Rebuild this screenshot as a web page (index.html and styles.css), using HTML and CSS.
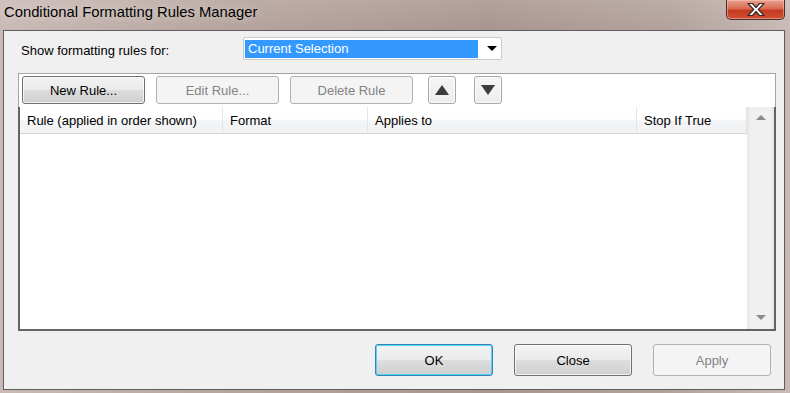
FILE: index.html
```html
<!DOCTYPE html>
<html lang="en">
<head>
    <meta charset="UTF-8">
    <title>Conditional Formatting Rules Manager</title>
    <link rel="stylesheet" href="styles.css">
</head>
<body>
    <div class="window">
        <div class="title-bar">
            <span class="title">Conditional Formatting Rules Manager</span>
            <button class="close-x" aria-label="Close">
                <svg width="26" height="15" viewBox="0 0 26 15">
                    <path d="M5 1.5h4.5l3.5 4 3.5-4h4.5l-5.7 6 5.7 6h-4.5l-3.5-4-3.5 4h-4.5l5.7-6z" fill="#fff" stroke="#3b2a28" stroke-width="1.2" stroke-linejoin="round"/>
                </svg>
            </button>
        </div>

        <div class="dialog">
            <div class="show-row">
                <label class="show-label">Show formatting rules for:</label>
                <div class="select">
                    <span class="select-value">Current Selection</span>
                    <span class="select-arrow"></span>
                </div>
            </div>

            <div class="rules-box">
                <div class="toolbar">
                    <button class="btn btn-wide">New Rule...</button>
                    <button class="btn btn-wide" disabled>Edit Rule...</button>
                    <button class="btn btn-wide" disabled>Delete Rule</button>
                    <button class="btn btn-icon btn-up"><span class="tri-up"></span></button>
                    <button class="btn btn-icon btn-down"><span class="tri-down"></span></button>
                </div>
                <div class="list">
                    <div class="list-main">
                        <div class="list-head">
                            <div class="col col-rule">Rule (applied in order shown)</div>
                            <div class="col col-format">Format</div>
                            <div class="col col-applies">Applies to</div>
                            <div class="col col-stop">Stop If True</div>
                        </div>
                        <div class="list-body"></div>
                    </div>
                    <div class="scrollbar">
                        <span class="sb-up"></span>
                        <span class="sb-down"></span>
                    </div>
                </div>
            </div>

            <div class="footer">
                <button class="btn btn-foot btn-default">OK</button>
                <button class="btn btn-foot">Close</button>
                <button class="btn btn-foot" disabled>Apply</button>
            </div>
        </div>
    </div>
</body>
</html>
```

FILE: styles.css
```css
* {
    margin: 0;
    padding: 0;
    box-sizing: border-box;
}
body {
    font-family: 'Liberation Sans', Arial, sans-serif;
    font-size: 13px;
    color: #000;
    background: #a8948e;
}
.window {
    width: 790px;
    height: 393px;
    overflow: hidden;
    background: linear-gradient(to right, #c9bab5 0%, #b5a39d 30%, #a9958f 62%, #b3a29c 85%, #c8bab6 100%);
}
.title-bar {
    height: 30px;
    display: flex;
    align-items: flex-start;
    background: linear-gradient(to bottom, rgba(255, 255, 255, 0.12), rgba(255, 255, 255, 0));
}
.title {
    padding: 4px 0 0 4px;
    font-size: 14.8px;
    color: #000;
    text-shadow: 0 0 8px rgba(255, 255, 255, 0.6);
}
.close-x {
    margin-left: auto;
    margin-right: 5px;
    width: 59px;
    height: 20px;
    border: 1px solid #4a2d28;
    border-top: none;
    border-radius: 0 0 5px 5px;
    background: linear-gradient(to bottom, #e9a190 0%, #da6a52 45%, #c43a21 55%, #cf5034 100%);
    display: flex;
    align-items: center;
    justify-content: center;
    box-shadow: inset 0 0 0 1px rgba(255, 210, 200, 0.45);
}
.dialog {
    margin-left: 3px;
    width: 782px;
    height: 360px;
    background: #f0f0f0;
    border: 1px solid #5e5e5e;
    padding: 6px 0 0 0;
}
.show-row {
    display: flex;
    align-items: center;
    height: 23px;
}
.show-label {
    margin-left: 17px;
    width: 222px;
    padding-top: 3px;
}
.select {
    width: 259px;
    height: 23px;
    background: #fff;
    border: 1px solid #c7c9cc;
    border-radius: 2px;
    display: flex;
    align-items: center;
    padding: 1px;
}
.select-value {
    width: 233px;
    height: 18px;
    background: #3399ff;
    color: #fff;
    padding: 1px 0 0 3px;
    line-height: 15px;
}
.select-arrow {
    margin-left: 9px;
    width: 0;
    height: 0;
    border-left: 5px solid transparent;
    border-right: 5px solid transparent;
    border-top: 5px solid #000;
}
.rules-box {
    margin: 13px 0 0 14px;
    width: 758px;
    height: 258px;
    background: #fff;
    border-top: 1px solid #a5a5a5;
    border-left: 1px solid #a5a5a5;
    border-right: 1px solid #a5a5a5;
    display: flex;
    flex-direction: column;
}
.toolbar {
    height: 33px;
    display: flex;
    align-items: flex-start;
    padding: 2px 0 0 3px;
}
.btn {
    font-family: 'Liberation Sans', Arial, sans-serif;
    font-size: 13px;
    color: #000;
    height: 28px;
    border: 1px solid #707070;
    border-radius: 3px;
    background: linear-gradient(to bottom, #f2f2f2 0%, #ebebeb 48%, #dddddd 52%, #cfcfcf 100%);
    box-shadow: inset 0 0 0 1px rgba(255, 255, 255, 0.7);
    display: flex;
    align-items: center;
    justify-content: center;
}
.btn:disabled {
    color: #838383;
    border-color: #adb2b5;
    background: #f4f4f4;
    box-shadow: none;
}
.btn-wide {
    width: 123px;
    margin-right: 11px;
}
.btn-icon {
    width: 28px;
    border-color: #a8a8a8;
    background: linear-gradient(to bottom, #f6f6f6, #ececec);
}
.btn-up {
    margin-left: 4px;
    margin-right: 18px;
}
.tri-up, .tri-down {
    width: 0;
    height: 0;
    border-left: 7px solid transparent;
    border-right: 7px solid transparent;
}
.tri-up {
    border-bottom: 10px solid #3c3c3c;
}
.tri-down {
    border-top: 10px solid #3c3c3c;
}
.list {
    flex: 1;
    display: flex;
    margin: 0 -1px;
    border: 2px solid #646464;
    border-top: none;
    background: #fff;
}
.list-main {
    flex: 1;
    display: flex;
    flex-direction: column;
}
.list-head {
    height: 27px;
    display: flex;
    border-bottom: 1px solid #d5d5d5;
    background: linear-gradient(to bottom, #ffffff 0%, #ffffff 45%, #f3f4f6 55%, #f1f2f4 100%);
}
.col {
    padding: 6px 0 0 7px;
    border-right: 1px solid #e3e4e6;
}
.col-rule { width: 203px; }
.col-format { width: 145px; }
.col-applies { width: 269px; }
.col-stop { width: 110px; }
.list-body {
    flex: 1;
}
.scrollbar {
    width: 27px;
    background: linear-gradient(to right, #e6e6e6 0%, #f0f0f0 15%, #f0f0f0 85%, #e6e6e6 100%);
    display: flex;
    flex-direction: column;
    justify-content: space-between;
    align-items: center;
    padding: 8px 0 9px 0;
}
.sb-up, .sb-down {
    width: 0;
    height: 0;
    border-left: 5px solid transparent;
    border-right: 5px solid transparent;
}
.sb-up {
    border-bottom: 5px solid #8a8a8a;
}
.sb-down {
    border-top: 5px solid #8a8a8a;
}
.footer {
    margin-top: 13px;
    display: flex;
    justify-content: flex-end;
    gap: 21px;
    padding-right: 13px;
}
.btn-foot {
    width: 118px;
    height: 32px;
}
.btn-default {
    border-color: #3c7fb1;
    box-shadow: inset 0 0 0 1px #48d8fb;
}
```
